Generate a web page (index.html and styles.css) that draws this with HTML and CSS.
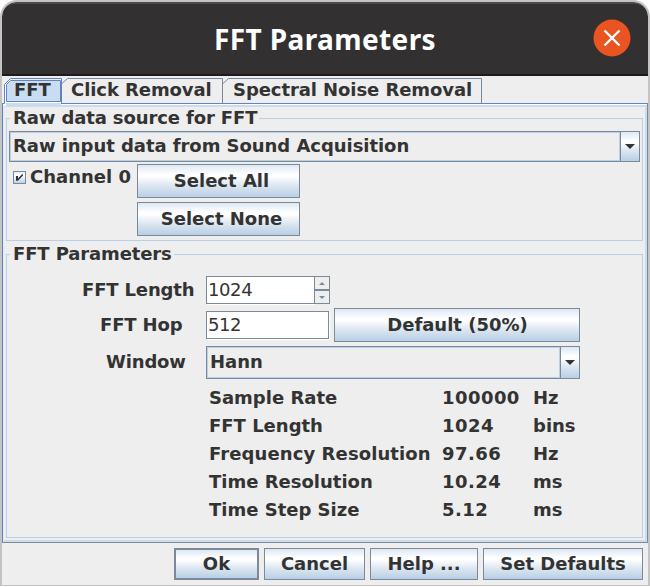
FILE: index.html
```html
<!DOCTYPE html>
<html lang="en">
<head>
<meta charset="utf-8">
<title>FFT Parameters</title>
<link rel="stylesheet" href="styles.css">
</head>
<body>
<div class="window">
  <header class="titlebar">
    <h1>FFT Parameters</h1>
    <svg class="close" width="38" height="38" viewBox="0 0 38 38"><circle cx="19" cy="19" r="18.5" fill="#e95420"/><path d="M11.5 11.5L26.5 26.5M26.5 11.5L11.5 26.5" stroke="#fff" stroke-width="2.4"/></svg>
  </header>
  <nav class="tabs">
    <div class="tab tab-fft">
      <svg width="60" height="29" viewBox="0 0 60 29"><path d="M2 28V7L7 2H59V28Z" fill="#fff"/><path d="M4 23.5V7L8 3H59V23.5Z" fill="#c8ddf2"/><path d="M4 25H59V29H4Z" fill="#c8ddf2"/><path d="M0 25.5H2.5V6.5L8.5 .5H59.5V25.5" fill="none" stroke="#6382bf"/><path d="M4.5 23.5V6.5L8.5 2.5H58.5V23.5Z" fill="none" stroke="#6382bf"/></svg>
      <span>FFT</span>
    </div>
    <div class="tab tab-click">
      <svg width="161" height="26" viewBox="0 0 161 26"><path d="M0 5.5L5.5 .5H160.5V25" fill="none" stroke="#7a8a99"/></svg>
      <span>Click Removal</span>
    </div>
    <div class="tab tab-noise">
      <svg width="259" height="26" viewBox="0 0 259 26"><path d="M0 5.5L5.5 .5H258.5V25" fill="none" stroke="#7a8a99"/></svg>
      <span>Spectral Noise Removal</span>
    </div>
  </nav>
  <main class="panel">
    <section class="group source">
      <h2><span>Raw data source for FFT</span></h2>
      <div class="combo wide"><div class="value"><span>Raw input data from Sound Acquisition</span></div><div class="arrow"><svg width="10" height="5" viewBox="0 0 10 5"><path d="M0 0H10L5 5Z" fill="#333"/></svg></div></div>
      <div class="channels">
        <label class="check"><svg width="13" height="13" viewBox="0 0 13 13"><defs><linearGradient id="cg" x2="0" y2="1"><stop offset="0" stop-color="#dde8f3"/><stop offset=".3" stop-color="#fff"/><stop offset="1" stop-color="#b8cfe5"/></linearGradient></defs><rect x=".5" y=".5" width="12" height="12" fill="url(#cg)" stroke="#7a8a99"/><path d="M3 5H5V7.5L9 3.2H10V4.5L5 9.8H3Z" fill="#333"/></svg><span>Channel 0</span></label>
        <div class="select-buttons"><button><span>Select All</span></button><button><span>Select None</span></button></div>
      </div>
    </section>
    <section class="group params">
      <h2><span>FFT Parameters</span></h2>
      <div class="row length"><span class="label">FFT Length</span>
        <div class="spinner"><div class="field">1024</div><div class="steps"><i><svg width="6" height="3" viewBox="0 0 6 3"><path d="M0 3L3 0L6 3Z" fill="#7a8a99"/></svg></i><i><svg width="6" height="3" viewBox="0 0 6 3"><path d="M0 0H6L3 3Z" fill="#7a8a99"/></svg></i></div></div>
      </div>
      <div class="row hop"><span class="label">FFT Hop</span><div class="field">512</div><button><span>Default (50%)</span></button></div>
      <div class="row win"><span class="label">Window</span><div class="combo"><div class="value"><span>Hann</span></div><div class="arrow"><svg width="10" height="5" viewBox="0 0 10 5"><path d="M0 0H10L5 5Z" fill="#333"/></svg></div></div></div>
      <div class="stats">
        <span>Sample Rate</span><span class="num">100000</span><span>Hz</span>
        <span>FFT Length</span><span class="num">1024</span><span>bins</span>
        <span class="freq">Frequency Resolution</span><span class="num">97.66</span><span>Hz</span>
        <span>Time Resolution</span><span class="num">10.24</span><span>ms</span>
        <span>Time Step Size</span><span class="num">5.12</span><span>ms</span>
      </div>
    </section>
  </main>
  <footer class="actions">
    <button class="ok"><span>Ok</span></button><button class="cancel"><span>Cancel</span></button><button class="help"><span>Help ...</span></button><button class="defaults"><span>Set Defaults</span></button>
  </footer>
</div>
</body>
</html>
```
FILE: styles.css
```css
* { box-sizing: border-box; }
body { margin: 0; background: #fff; font: bold 18px/22px "DejaVu Sans", sans-serif; color: #333; }
span { white-space: nowrap; }
svg { display: block; flex: none; }
.window { width: 650px; height: 586px; border: 2px solid #c4c4c4; border-bottom-width: 1px; border-radius: 17px 17px 0 0; background: #eee; overflow: hidden; }
.titlebar { height: 74px; display: flex; align-items: center; justify-content: center; position: relative; background: #333031; border-top: 2px solid #4a4849; border-bottom: 2px solid #1e1b1e; border-radius: 14px 14px 0 0; }
.titlebar h1 { margin: 0 0 1px; font: bold 28px/36px "Noto Sans", sans-serif; letter-spacing: .4px; color: #fff; }
.close { position: absolute; right: 17px; top: 15px; }
.tabs { display: flex; height: 27px; padding-top: 2px; }
.tab { position: relative; height: 26px; flex: none; }
.tab svg { position: absolute; left: 0; top: 0; }
.tab span { position: relative; display: block; padding-top: 1px; letter-spacing: -.08px; }
.tab-fft { width: 60px; z-index: 2; padding-left: 12px; }
.tab-click { width: 161px; padding-left: 9px; }
.tab-noise { width: 259px; padding-left: 10px; }
.panel { height: 440px; border: 1px solid #7a8a99; border-top-color: #6382bf; border-left-color: #6382bf; box-shadow: inset 0 1px #fff, inset 1px 0 #dfeaf7, inset 0 3px #c8ddf2, inset -2px -2px #c8ddf2; padding: 4px 4px 0 3px; }
.group { border: 1px solid #b8cfe5; position: relative; width: 637px; }
.group h2 { margin: 0; font: inherit; position: absolute; left: 3px; top: -12px; background: #eee; padding: 0 2px 0 3px; height: 22px; letter-spacing: -.12px; }
.group h2 span { display: block; }
.source { margin-top: 10px; height: 123px; padding: 12px 2px 0; }
.combo { display: flex; border: 1px solid #7a8a99; }
.wide { width: 631px; height: 31px; letter-spacing: -.05px; }
.combo .value { flex: 1; border: 1px solid #b8cfe5; padding: 0 0 1px 2px; display: flex; align-items: center; }
.combo .arrow, button { background: linear-gradient(#dde8f3 0, #fff 30%, #fff 35%, #dbe6f1 65%, #b8cfe5 100%); }
.combo .arrow { width: 19px; border-left: 1px solid #7a8a99; display: flex; align-items: center; justify-content: center; }
button { border: 1px solid #7a8a99; border-radius: 0; padding: 0; font: inherit; color: #333; display: flex; align-items: center; justify-content: center; flex: none; }
.channels { display: flex; padding-top: 2px; }
.check { display: flex; width: 128px; padding-left: 4px; gap: 4px; }
.check svg { margin-top: 7px; }
.check span { margin-top: 2px; }
.select-buttons { display: flex; flex-direction: column; gap: 4px; }
.select-buttons button { width: 163px; height: 34px; padding-left: 6px; }
.params { margin-top: 13px; height: 284px; padding: 21px 0 0; }
.row { display: flex; }
.label { width: 199px; letter-spacing: -.15px; }
.length .label { padding: 3px 0 0 75px; }
.hop .label { padding: 6px 0 0 93px; }
.win .label { padding: 5px 0 0 99px; }
.field { height: 28px; background: #fff; border: 1px solid #7a8a99; box-shadow: 1px 1px #fff; padding: 2px 0 0 1px; font-weight: normal; width: 123px; }
.spinner { display: flex; }
.spinner .field { width: 108px; border-right: 0; letter-spacing: -.4px; }
.hop .field { letter-spacing: -.4px; }
.steps { width: 16px; background: #eee; position: relative; }
.steps i { display: flex; height: 14px; align-items: center; justify-content: center; border: 1px solid #7a8a99; }
.hop { padding-top: 4px; }
.hop .field { margin-top: 3px; }
.hop button { width: 246px; height: 34px; margin-left: 5px; padding-left: 1px; }
.win { padding-top: 4px; }
.win .combo { width: 374px; height: 33px; }
.stats { display: grid; grid-template-columns: 233px 91px auto; grid-auto-rows: 28px; line-height: 28px; padding: 5px 0 0 202px; }
.num { letter-spacing: .45px; }
.freq { letter-spacing: .1px; }
.actions { display: flex; gap: 5px; padding: 5px 5px 0 0; justify-content: flex-end; }
.actions button { height: 32px; }
.ok { width: 85px; border-width: 2px; }
.actions .cancel { width: 101px; }
.help { width: 108px; }
.defaults { width: 160px; }
```
